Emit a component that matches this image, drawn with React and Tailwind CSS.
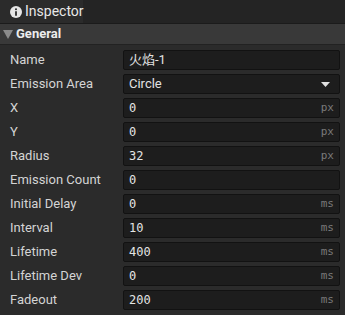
import React from "react";

const rows = [
  { label: "Name", value: "火焰-1", kind: "text" },
  { label: "Emission Area", value: "Circle", kind: "select" },
  { label: "X", value: "0", unit: "px" },
  { label: "Y", value: "0", unit: "px" },
  { label: "Radius", value: "32", unit: "px" },
  { label: "Emission Count", value: "0" },
  { label: "Initial Delay", value: "0", unit: "ms" },
  { label: "Interval", value: "10", unit: "ms" },
  { label: "Lifetime", value: "400", unit: "ms" },
  { label: "Lifetime Dev", value: "0", unit: "ms" },
  { label: "Fadeout", value: "200", unit: "ms" },
];

function InfoIcon() {
  return (
    <svg width="12" height="12" viewBox="0 0 16 16" className="shrink-0">
      <circle cx="8" cy="8" r="8" fill="#e6e6e6" />
      <rect x="6.8" y="7" width="2.4" height="6" fill="#2c2c2c" />
      <circle cx="8" cy="4.4" r="1.4" fill="#2c2c2c" />
    </svg>
  );
}

function Field({ row }) {
  const base =
    "h-5 flex-1 flex items-center rounded-[2px] border border-[#121212] bg-[#1d1d1d] px-[5px]";
  if (row.kind === "text") {
    return (
      <div className={base}>
        <span className="text-[13px] text-[#e2e2e2] font-['Roboto','Noto_Sans_CJK_SC',sans-serif]">
          {row.value}
        </span>
      </div>
    );
  }
  if (row.kind === "select") {
    return (
      <div className={`${base} justify-between`}>
        <span className="text-[13px] text-[#e2e2e2] font-['Roboto',sans-serif]">{row.value}</span>
        <svg width="9" height="5" viewBox="0 0 9 5" className="mr-[4px]">
          <polygon points="0,0 9,0 4.5,5" fill="#e0e0e0" />
        </svg>
      </div>
    );
  }
  return (
    <div className={`${base} justify-between`}>
      <span className="text-[12px] text-[#e4e4e4] font-['DejaVu_Sans_Mono',monospace]">{row.value}</span>
      {row.unit && (
        <span className="text-[11px] text-[#7a7a7a] font-['DejaVu_Sans_Mono',monospace]">{row.unit}</span>
      )}
    </div>
  );
}

export default function App() {
  return (
    <div className="w-[345px] h-[315px] overflow-hidden bg-[#2b2b2b] font-['Roboto',sans-serif] select-none">
      {/* tab strip */}
      <div className="h-6 flex bg-[#242424] border-b border-[#1b1b1b]">
        <div className="w-[83px] flex items-center gap-[3px] pl-[10px] bg-[#2b2b2b]">
          <InfoIcon />
          <span className="text-[14px] text-[#e8e8e8]">Inspector</span>
        </div>
      </div>

      {/* section header */}
      <div className="h-[21px] flex items-center gap-[3px] pl-[3px] bg-[#393939] border-b border-[#222]">
        <svg width="10" height="9" viewBox="0 0 10 9">
          <polygon points="0,0 10,0 5,9" fill="#8a8a8a" />
        </svg>
        <span className="text-[13px] font-bold text-[#ececec]">General</span>
      </div>

      {/* properties */}
      <div className="flex flex-col gap-1 pt-[5px] pl-[10px] pr-[5px]">
        {rows.map((row) => (
          <div key={row.label} className="flex items-center h-5">
            <span className="w-[113px] shrink-0 text-[13px] text-[#d4d4d4] whitespace-nowrap">{row.label}</span>
            <Field row={row} />
          </div>
        ))}
      </div>
    </div>
  );
}
